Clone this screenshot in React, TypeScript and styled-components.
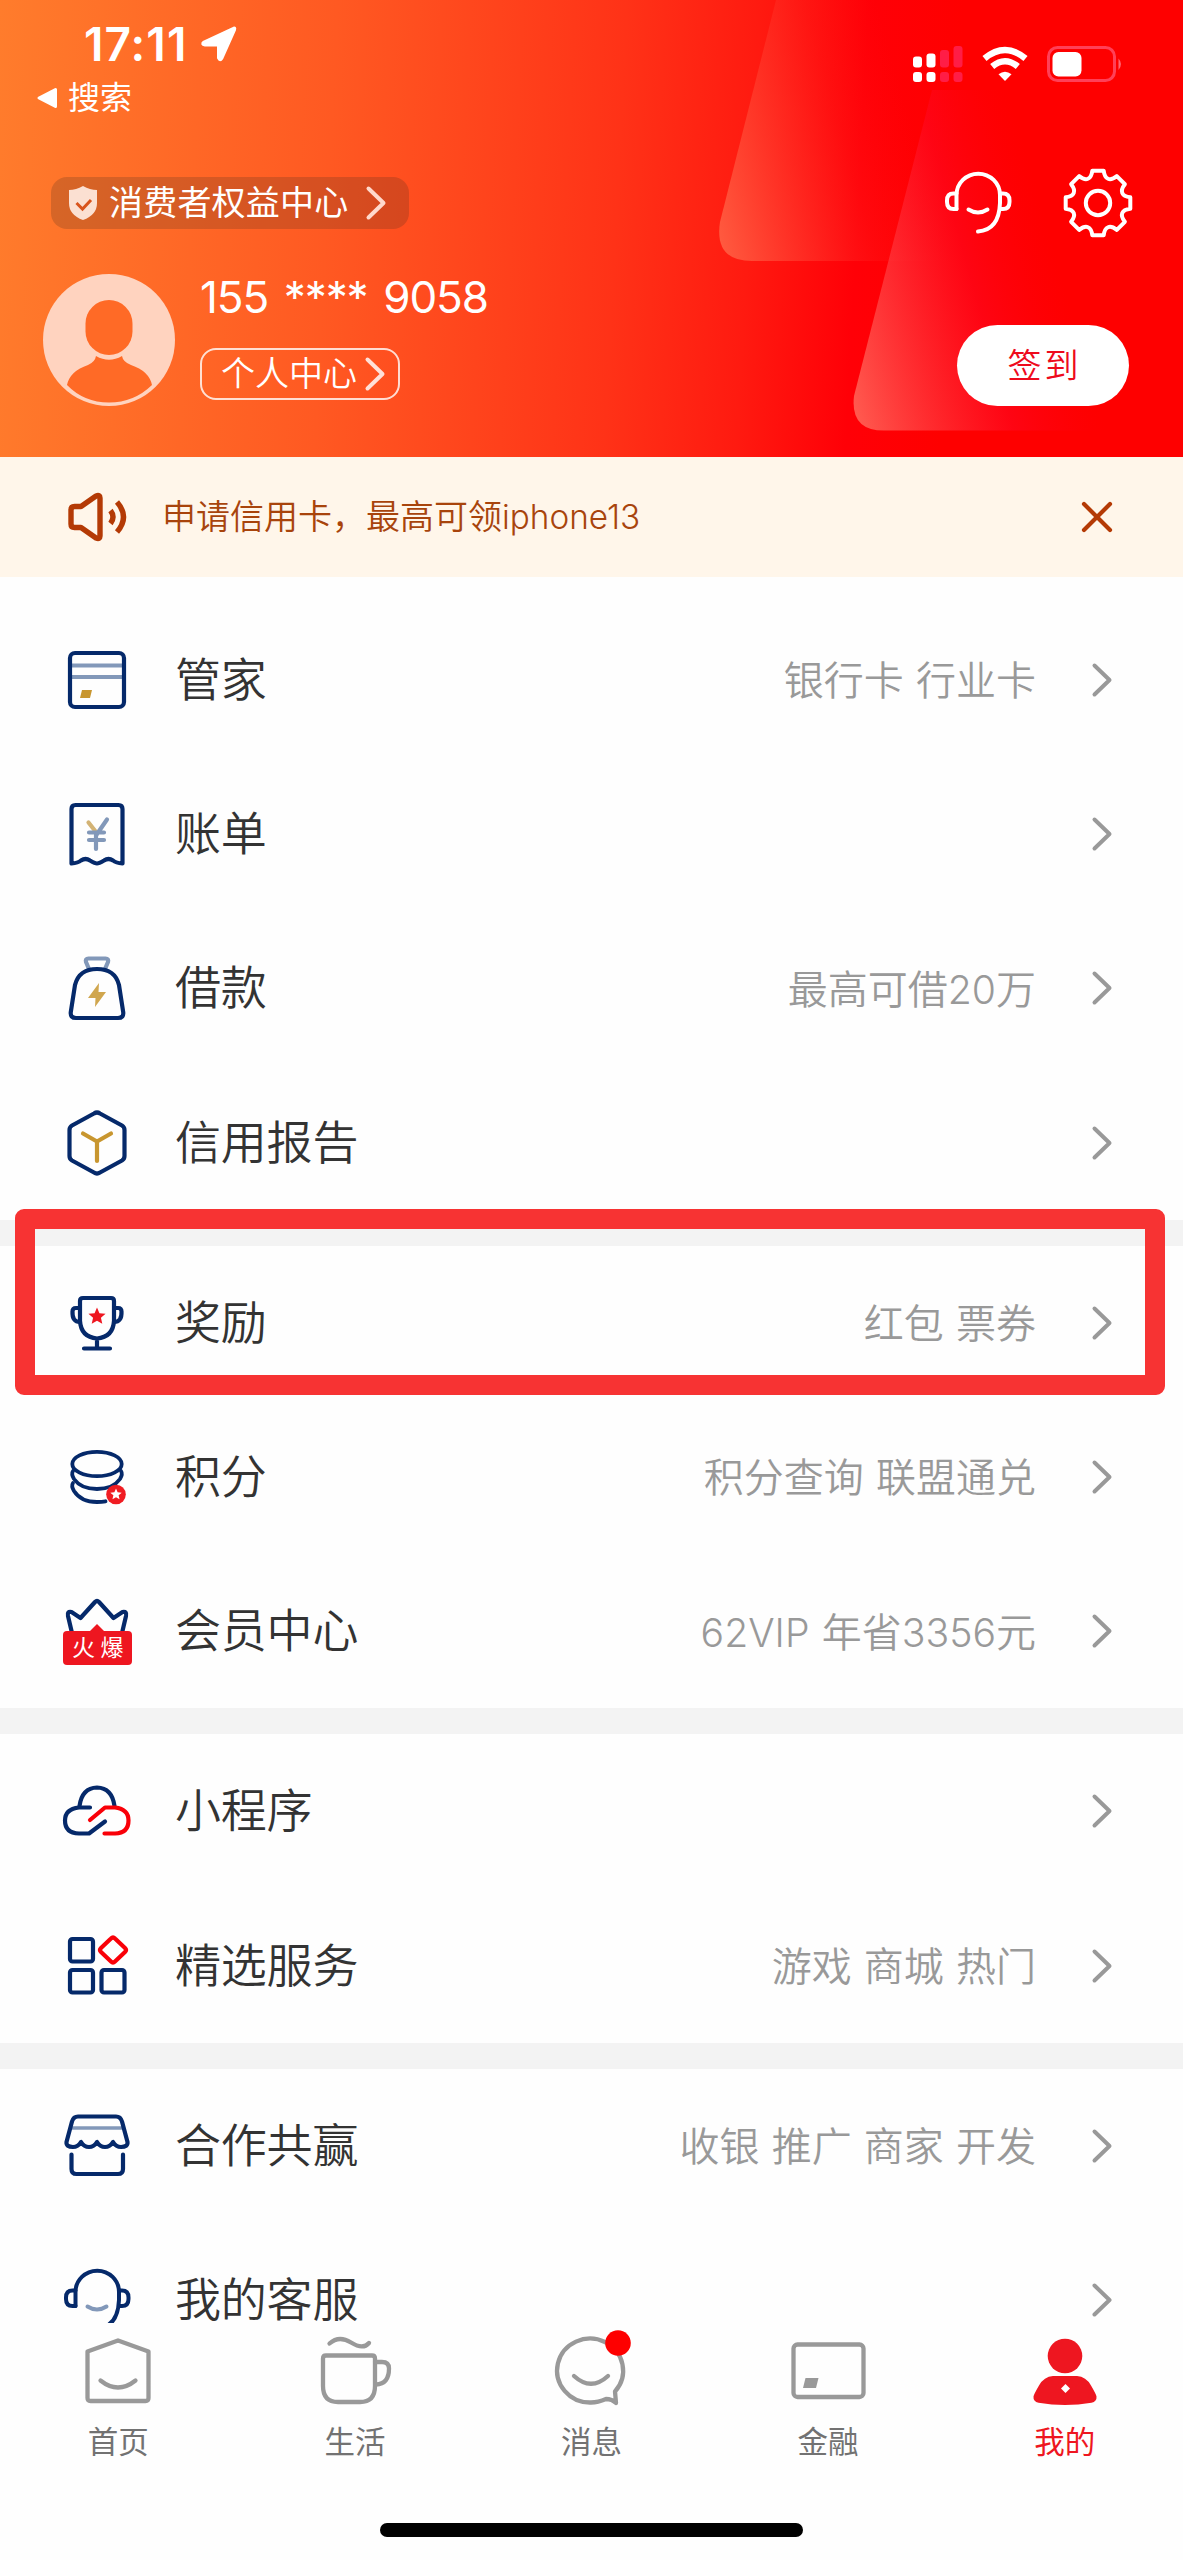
import React from "react";
import styled, { createGlobalStyle } from "styled-components";

const NAVY = "#05296a";
const STEEL = "#8298b9";
const GOLD = "#c8962f";
const RED = "#ee1620";
const FONT = `Roboto, "Noto Sans CJK SC", sans-serif`;

const GlobalStyle = createGlobalStyle`
  * { box-sizing: border-box; }
  body { margin: 0; background: #fefefe; font-family: ${FONT}; }
  svg { display: block; flex: none; overflow: visible; }
`;

const Screen = styled.div`
  width: 1183px;
  height: 2560px;
  display: flex;
  flex-direction: column;
  overflow: hidden;
  background: #fefefe;
`;

/* ---------- header ---------- */

const Header = styled.header`
  position: relative;
  flex: none;
  height: 457px;
  color: #fff;
  background: linear-gradient(93deg, #ff7c2c 0%, #ff5922 28%, #ff3217 52%, #ff1a10 63%, #ff0007 72%, #fe0000 80%);
`;

const Backdrop = styled.svg`
  position: absolute;
  left: 0;
  top: 0;
`;

const HeaderBody = styled.div`
  position: relative;
  padding-top: 20px;
`;

const StatusBar = styled.div`
  display: flex;
  justify-content: space-between;
  height: 94px;
  padding: 0 59px 0 37px;
`;

const StatusLeft = styled.div`
  display: flex;
  flex-direction: column;
  gap: 14px;
`;

const Clock = styled.div`
  display: flex;
  align-items: center;
  gap: 14px;
  height: 48px;
  padding-left: 47px;
  font: 600 46px/48px Inter, sans-serif;
  letter-spacing: 1.1px;
`;

const BackLink = styled.div`
  display: flex;
  align-items: center;
  gap: 10px;
  height: 32px;
  font-size: 32px;
  line-height: 32px;
`;

const StatusIcons = styled.div`
  display: flex;
  align-items: center;
  gap: 19px;
  height: 36px;
  margin-top: 26px;
`;

const ToolRow = styled.div`
  display: flex;
  align-items: center;
  justify-content: space-between;
  height: 52px;
  margin-top: 63px;
  padding: 0 49px 0 51px;
`;

const Tools = styled.div`
  display: flex;
  gap: 48px;
`;

const RightsPill = styled.div`
  display: flex;
  align-items: center;
  width: 358px;
  height: 52px;
  padding: 0 22px 0 17px;
  border-radius: 16px;
  background: rgba(50, 40, 30, 0.2);
  font-size: 34px;
  line-height: 52px;
  letter-spacing: 0.2px;
  white-space: nowrap;

  span { margin: 0 auto 0 11px; }
`;

const Profile = styled.div`
  display: flex;
  height: 132px;
  margin-top: 45px;
  padding: 0 54px 0 43px;
`;

const Identity = styled.div`
  display: flex;
  flex-direction: column;
  align-items: flex-start;
  margin-left: 25px;
`;

const Phone = styled.div`
  height: 48px;
  margin: -1px 0 27px 0;
  font: 400 44px/48px Inter, sans-serif;
  letter-spacing: -1.1px;
  word-spacing: 4.4px;
  white-space: pre;
`;

const CenterPill = styled.div`
  display: flex;
  align-items: center;
  justify-content: space-between;
  width: 200px;
  height: 52px;
  padding: 0 12px 0 19px;
  border: 2px solid rgba(255, 255, 255, 0.8);
  border-radius: 16px;
  font-size: 34px;
  font-weight: 350;
  line-height: 48px;
`;

const SignButton = styled.button`
  align-self: flex-end;
  width: 172px;
  height: 81px;
  margin-left: auto;
  padding: 0 0 0 3px;
  border: 0;
  border-radius: 41px;
  background: #fff;
  color: #ee0a1c;
  font: 350 34px/80px ${FONT};
  letter-spacing: 3px;
`;

/* ---------- notice ---------- */

const Notice = styled.div`
  display: flex;
  align-items: center;
  flex: none;
  height: 120px;
  padding: 0 70px 0 67px;
  background: #fff6ea;
  color: #a8440c;
`;

const NoticeText = styled.span`
  margin: 0 auto 0 34px;
  font-size: 34px;
  font-weight: 350;
  line-height: 44px;
`;

/* Latin letters and digits use a lighter face than the Chinese text beside them. */
const Latin = styled.span`
  font-family: Inter, sans-serif;
  font-size: 0.98em;
  font-weight: 300;
`;

/* ---------- list ---------- */

const List = styled.main`
  flex: 1;
  min-height: 0;
  overflow: hidden;
  padding-top: 26px;
`;

const Group = styled.section`
  & + & { border-top: 26px solid #f3f3f3; }
`;

const Row = styled.div`
  position: relative;
  display: flex;
  align-items: center;
  height: 154.2px;
  padding: 0 70px 0 57px;
`;

const Title = styled.span`
  margin: 0 auto 0 38px;
  color: #333;
  font-size: 46px;
  font-weight: 350;
  line-height: 44px;
  letter-spacing: -0.2px;
`;

const Hint = styled.span`
  margin-right: 55px;
  padding-top: 4px;
  color: #999;
  font-size: 40px;
  font-weight: 350;
  line-height: 44px;
  word-spacing: 2.4px;
`;

const HighlightFrame = styled.div`
  position: absolute;
  z-index: 1;
  top: -37px;
  left: 15px;
  width: 1150px;
  height: 186px;
  border: 20px solid #f73333;
  border-radius: 9px;
`;

const HotTag = styled.div`
  position: absolute;
  left: 63px;
  top: 77px;
  width: 69px;
  height: 34px;
  padding-left: 6px;
  border-radius: 4px;
  background: ${RED};
  color: #fff;
  font-size: 23px;
  line-height: 36px;
  letter-spacing: 5.5px;
  text-align: center;
  white-space: nowrap;
`;

/* ---------- tab bar ---------- */

const TabBar = styled.nav`
  flex: none;
  height: 237.3px;
  display: flex;
  flex-direction: column;
  align-items: center;
  justify-content: space-between;
  padding-bottom: 23px;
  background: #fefefe;
`;

const Tabs = styled.div`
  display: flex;
  width: 100%;
  padding-top: 9px;
`;

const Tab = styled.div<{ $active?: boolean }>`
  flex: 1;
  display: flex;
  flex-direction: column;
  align-items: center;
  gap: 13px;
  color: ${(p) => (p.$active ? RED : "#727272")};
  font-size: 30.5px;
  line-height: 40px;
`;

const HomeIndicator = styled.div`
  width: 423px;
  height: 14.5px;
  border-radius: 8px;
  background: #000;
`;

/* ---------- icons ---------- */

const Chevron = ({ color = "#999", width = 4 }: { color?: string; width?: number }) => (
  <svg width="22" height="36" viewBox="0 0 22 36" fill="none" stroke={color} strokeWidth={width} strokeLinecap="round" strokeLinejoin="round">
    <path d="M3.5 3.5 18.5 18 3.5 32.5" />
  </svg>
);

/* All row icons share an 80-unit box with the origin at its centre. */
const Glyph = ({ children, size = 80 }: { children: React.ReactNode; size?: number }) => (
  <svg
    width={size}
    height={size}
    viewBox={`${-size / 2} ${-size / 2} ${size} ${size}`}
    fill="none"
    stroke={NAVY}
    strokeWidth="4.2"
    strokeLinecap="round"
    strokeLinejoin="round"
  >
    {children}
  </svg>
);

const starPoints = (cx: number, cy: number, r: number, inner = 0.46) =>
  Array.from({ length: 10 }, (_, i) => {
    const a = (Math.PI / 5) * i - Math.PI / 2;
    const d = i % 2 ? r * inner : r;
    return `${(cx + d * Math.cos(a)).toFixed(2)},${(cy + d * Math.sin(a)).toFixed(2)}`;
  }).join(" ");

const CardIcon = () => (
  <Glyph>
    <path d="M-26-14.5H26M-26-3H26" stroke={STEEL} strokeWidth="3.8" strokeLinecap="butt" />
    <rect x="-27" y="-27" width="54" height="54" rx="5" />
    <path d="M-15 10h10l-2 8h-10z" fill={GOLD} stroke="none" />
  </Glyph>
);

const BillIcon = () => (
  <Glyph>
    <path d="M-25.500 29.500V-25q0-4 4-4h43q4 0 4 4V29.500Q19 29 16 26.500q-4.500-3-9 0Q2 29.500 0 29.500T-7 26.500q-4.500-3-9 0-3 2.500-9.500 3z" />
    <path d="M-8.500-11.500-1-2" stroke="#d3b375" />
    <path d="M10-14.500-1 1.500V15M-8-1.500H7M-8 6H7" stroke={STEEL} />
  </Glyph>
);

const BagIcon = () => (
  <Glyph>
    <path d="M-8-19-11-26q-1-3.500 2.500-3.500h17q3.500 0 2.500 3.500L8-19" stroke={STEEL} />
    <path d="M-21 30q-6 0-5.200-6L-22-3Q-18-19 0-19T22-3L26.200 24q.8 6-5.200 6z" />
    <path d="M2-5-9 10h7.500L-2 19 9 4H1.500z" fill={GOLD} fillOpacity=".85" stroke="none" />
  </Glyph>
);

const CubeIcon = () => (
  <Glyph>
    <path d="M-3-29.500q3-2 6 0L25-17.500q2.500 1.500 2.500 4.500v26q0 3-2.500 4.500L3 29.500q-3 2-6 0L-25 17.500q-2.500-1.500-2.500-4.500v-26q0-3 2.500-4.500z" />
    <path d="M-14-9.500 0-1.500 14-9.500M0-1.500V18" stroke={GOLD} />
  </Glyph>
);

const TrophyIcon = () => (
  <Glyph>
    <path d="M-17-22q0-3 3-3h28q3 0 3 3V-2Q16 14 0 15.500-16 14-17-2zM0 16v9M-13 25.500h26" />
    <path d="M-18-15h-3q-3.500 0-3.500 3.500Q-25-1-17-1M18-15h3q3.500 0 3.500 3.500Q25-1 17-1" />
    <polygon points={starPoints(0, -6.500, 9)} fill={RED} stroke="none" />
  </Glyph>
);

const CoinsIcon = () => (
  <Glyph>
    <g strokeWidth="3.800">
      <ellipse cy="-13" rx="24.700" ry="12.200" />
      <path d="M-24-6Q-26-3-23 2-16 12 0 12 16 12 23 2 26-3 24-6" />
      <path d="M-24 6Q-26 9-23 14-16 25 0 25q5 0 8.500-.7" />
    </g>
    <circle cx="19" cy="17.500" r="9.800" fill="#f01c22" stroke="none" />
    <polygon points={starPoints(19, 17.500, 6)} fill="#fff" stroke="none" />
  </Glyph>
);

const CrownIcon = () => (
  <Glyph>
    <path d="M-25 2-29-15q-1-5 3.500-4l9 6L-2-29q2-2 4 0L16.500-13l9-6q4.500-1 3.500 4L25 2" />
    <path d="M-8 1 0-7 8 1z" fill={RED} stroke="none" />
  </Glyph>
);

const CloudIcon = () => (
  <Glyph>
    <path d="M-17.500-5Q-15-23 0-23.500 15-23 17.500-5" />
    <path d="M-7-3.500H-18Q-32-2-32 9.500-32 22-18 22.500H-8L8 10.500" />
    <path d="M-7 9 8-3.500H18Q31.500-2 31.500 9.500 31.500 22 18 22.500H7.500" stroke="#f90008" />
  </Glyph>
);

const GridIcon = () => (
  <Glyph>
    <rect x="-27" y="-27" width="23" height="22.500" rx="2.500" />
    <rect x="-27" y="4" width="23" height="22.500" rx="2.500" />
    <rect x="4.500" y="4" width="23" height="22.500" rx="2.500" />
    <path d="M14-27.500q2-2 4 0L28-18q2 2 0 4L18-4.500q-2 2-4 0L4-14q-2-2 0-4z" stroke="#f90008" />
  </Glyph>
);

const ShopIcon = () => (
  <Glyph>
    <path d="M-25-18H26" stroke={STEEL} strokeWidth="3.600" strokeLinecap="butt" />
    <path d="M-19-29.500h38q4.500 0 6 5L30.500-4Q31 1 24 1 19 1 16-4 13 1 8 1T0-4Q-3 1-8 1T-16-4Q-19 1-24 1-31 1-30.500-4L-25-24.500q1.500-5 6-5z" />
    <path d="M-25.500 8.500V23q0 5 5 5h41.500q5 0 5-5V8.500" />
  </Glyph>
);

const Headset = ({ color, smile, size = 80 }: { color: string; smile: string; size?: number }) => (
  <Glyph size={size}>
    <g stroke={color} strokeWidth="4">
      <path d="M-21.500 6V-8A21.700 21.300 0 0 1 22-8V0Q21 27 0 28.500" />
      <path d="M-21.500-9.500h-3q-6.500 0-6.500 7v1.500q0 7 6.500 7h3M22-9.500h3q6.500 0 6.500 7v1.500q0 7-6.500 7h-3" />
      <path d="M-9.500 6.500Q0 12.500 9.500 6.500" stroke={smile} />
    </g>
  </Glyph>
);

const gearPath = (() => {
  const at = (deg: number, r: number) => {
    const a = (deg * Math.PI) / 180;
    return `${(r * Math.sin(a)).toFixed(2)} ${(-r * Math.cos(a)).toFixed(2)}`;
  };
  let d = "";
  for (let k = 0; k < 8; k++) {
    const t = k * 45;
    d += `${k ? "L" : "M"}${at(t - 10, 32.8)}L${at(t + 10, 32.8)}C${at(t + 16, 24.5)} ${at(t + 29, 24.5)} ${at(t + 35, 32.8)}`;
  }
  return d + "Z";
})();

const GearIcon = () => (
  <Glyph size={72}>
    <g stroke="#fff" strokeWidth="4">
      <path d={gearPath} />
      <circle r="12.200" />
    </g>
  </Glyph>
);

const HeaderBackdrop = () => (
  <Backdrop width="1183" height="457" viewBox="0 0 1183 457">
    <defs>
      <linearGradient id="panelA" gradientUnits="userSpaceOnUse" x1="720" y1="238" x2="927" y2="180">
        <stop offset="0" stopColor="#ff7a58" stopOpacity=".64" />
        <stop offset=".68" stopColor="#ff4038" stopOpacity=".13" />
        <stop offset="1" stopColor="#ff2020" stopOpacity="0" />
      </linearGradient>
      <linearGradient id="panelB" gradientUnits="userSpaceOnUse" x1="855" y1="408" x2="1082" y2="344">
        <stop offset="0" stopColor="#ff7868" stopOpacity=".74" />
        <stop offset=".62" stopColor="#ff0a26" stopOpacity=".5" />
        <stop offset="1" stopColor="#ff0010" stopOpacity="0" />
      </linearGradient>
    </defs>
    <path d="M776 0 720 222Q714 261 752 261H1000V0z" fill="url(#panelA)" />
    <path d="M932 90 854 396Q850 430.500 884 430.500H1150V90z" fill="url(#panelB)" />
  </Backdrop>
);

const tabStroke = { fill: "none", stroke: "#999", strokeWidth: 4.3, strokeLinecap: "round", strokeLinejoin: "round" } as const;

const TabIcon = ({ children }: { children: React.ReactNode }) => (
  <svg width="80" height="78" viewBox="-40 -40 80 78" {...tabStroke}>
    {children}
  </svg>
);

const mixed = (text: string) =>
  text.split(/([A-Za-z0-9]+)/).map((part, i) => (i % 2 ? <Latin key={i}>{part}</Latin> : part));

/* ---------- content ---------- */

type Item = { title: string; hint?: string; icon: React.ReactNode; framed?: boolean; tag?: string };

const groups: Item[][] = [
  [
    { title: "管家", hint: "银行卡 行业卡", icon: <CardIcon /> },
    { title: "账单", icon: <BillIcon /> },
    { title: "借款", hint: "最高可借20万", icon: <BagIcon /> },
    { title: "信用报告", icon: <CubeIcon /> },
  ],
  [
    { title: "奖励", hint: "红包 票券", icon: <TrophyIcon />, framed: true },
    { title: "积分", hint: "积分查询 联盟通兑", icon: <CoinsIcon /> },
    { title: "会员中心", hint: "62VIP 年省3356元", icon: <CrownIcon />, tag: "火爆" },
  ],
  [
    { title: "小程序", icon: <CloudIcon /> },
    { title: "精选服务", hint: "游戏 商城 热门", icon: <GridIcon /> },
  ],
  [
    { title: "合作共赢", hint: "收银 推广 商家 开发", icon: <ShopIcon /> },
    { title: "我的客服", icon: <Headset color={NAVY} smile={STEEL} /> },
  ],
];

const tabs = [
  {
    label: "首页",
    icon: (
      <path d="M-30.500-20.500 0-31.500 30.500-20.500V26q0 3-3 3h-55q-3 0-3-3zM-17.500 8.500Q0 22.500 17.500 8.500" />
    ),
  },
  {
    label: "生活",
    icon: (
      <>
        <path d="M-32-13.500q0-3 3-3h46q3 0 3 3V14q0 16-15 16h-22q-15 0-15-16z" />
        <path d="M20-10h7q7 0 7 6.500Q34 12 21 12.500M-25.500-28.500Q-16-37-4-29.500T14-29" />
      </>
    ),
  },
  {
    label: "消息",
    icon: (
      <>
        <path d="M15 27Q7 30.500 0 30.500A33 32 0 1 1 24 19.500L25 31q-4-4-10-4z" />
        <path d="M-17 4Q0 19.500 17 4" />
        <circle cx="27" cy="-29" r="12.800" fill="#fe0000" stroke="none" />
      </>
    ),
  },
  {
    label: "金融",
    icon: (
      <>
        <rect x="-34.500" y="-27.500" width="70" height="52.500" rx="4" />
        <path d="M-22.500 6h13l-2.500 10h-13z" fill="#999" stroke="none" />
      </>
    ),
  },
  {
    label: "我的",
    active: true,
    icon: (
      <g fill={RED} stroke="none">
        <circle cx="0" cy="-16" r="17.300" />
        <path d="M-12 4H12Q21 4.500 26 13.500q5 8.500 5.500 11 .5 5-5 6.300-26.500 4.500-53 0-5.500-1.300-5-6.300.5-2.500 5.500-11 5-9 14-9.500z" />
        <path d="M.5 12 5 16.500 .5 21-4 16.500z" fill="#fff" />
      </g>
    ),
  },
];

export default function App() {
  return (
    <Screen>
      <GlobalStyle />
      <Header>
        <HeaderBackdrop />
        <HeaderBody>
          <StatusBar>
            <StatusLeft>
              <Clock>
                17:11
                <svg width="36" height="36" viewBox="0 0 36 36" fill="#fff" stroke="#fff" strokeWidth="3" strokeLinejoin="round">
                  <path d="M32 2.500Q34.500 1 33.500 4L21 32q-2 3.500-3.500 0V19H4q-4-.5-1-3z" />
                </svg>
              </Clock>
              <BackLink>
                <svg width="21" height="22" viewBox="0 0 21 22" fill="#fff" stroke="#fff" strokeWidth="3" strokeLinejoin="round">
                  <path d="M2 11 18.500 2.500v17z" />
                </svg>
                搜索
              </BackLink>
            </StatusLeft>
            <StatusIcons>
              <svg width="50" height="36" viewBox="0 0 50 36" fill="#fff">
                <rect x="0" y="10.500" width="9" height="11" rx="3" />
                <rect x="13.500" y="7.500" width="9" height="14" rx="3" />
                <rect x="0" y="26" width="9" height="10" rx="3" />
                <rect x="13.500" y="26" width="9" height="10" rx="3" />
                <g fill="#ff1d46">
                  <rect x="27" y="4" width="9" height="17.500" rx="3" />
                  <rect x="40.500" y="0" width="9" height="21.500" rx="3" />
                  <rect x="27" y="26" width="9" height="10" rx="3" />
                  <rect x="40.500" y="26" width="9" height="10" rx="3" />
                </g>
              </svg>
              <svg width="46" height="36" viewBox="0 0 46 36" fill="none" stroke="#fff" strokeWidth="6.400">
                <path d="M2.500 12.500Q23-4.500 43.500 12.500M10.200 20.500Q23 10 35.800 20.500" />
                <path d="M23 35 16.500 28.300Q23 23 29.500 28.300z" fill="#fff" stroke="none" />
              </svg>
              <svg width="77" height="36" viewBox="0 0 77 36">
                <rect x="1.500" y="1.500" width="66" height="33" rx="9" fill="none" stroke="#ff4058" strokeWidth="3" />
                <rect x="5.500" y="6" width="29" height="24.500" rx="6" fill="#fff" />
                <path d="M71.500 12.500q5 5.500 0 11.500z" fill="#ff6673" />
              </svg>
            </StatusIcons>
          </StatusBar>

          <ToolRow>
            <RightsPill>
              <svg width="30" height="36" viewBox="0 0 30 36">
                <path d="M15 1q7 4 14 4v13q0 12-14 17Q1 30 1 18V5q7 0 14-4z" fill="#fbe0d2" />
                <path d="m8.500 18 6 6 8.500-9" fill="none" stroke="#d9541c" strokeWidth="3" />
              </svg>
              <span>消费者权益中心</span>
              <Chevron color="#ffd9cc" />
            </RightsPill>
            <Tools>
              <Headset color="#fff" smile="#fff" size={72} />
              <GearIcon />
            </Tools>
          </ToolRow>

          <Profile>
            <svg width="132" height="132" viewBox="0 0 132 132">
              <circle cx="66" cy="66" r="66" fill="#ffd3bf" />
              <rect x="42.500" y="26" width="47" height="55" rx="23.500" fill="#ff6a26" />
              <path d="M53 82q13 7.500 26 0 1 6 9 9 18 6 21 20-18 17.500-43 17.500T24 111q3-14 21-20 7-3 8-9z" fill="#ff6a26" />
            </svg>
            <Identity>
              <Phone>155 **** 9058</Phone>
              <CenterPill>
                个人中心
                <Chevron color="#ffe0d8" />
              </CenterPill>
            </Identity>
            <SignButton>签到</SignButton>
          </Profile>
        </HeaderBody>
      </Header>

      <Notice>
        <svg width="61" height="50" viewBox="0 0 61 50" fill="none" stroke="#b43a05" strokeWidth="5.400" strokeLinecap="round" strokeLinejoin="round">
          <path d="M7.500 14.500H14L29 4q4-1.500 4 2V44q0 3.500-4 2L14 35.500H7.500Q4 35.500 4 32V18q0-3.500 3.500-3.500z" />
          <path d="M43.500 18.500Q48.500 25 43.500 31.500M50 10Q63 25 50 40" strokeLinecap="butt" />
        </svg>
        <NoticeText>{mixed("申请信用卡，最高可领iphone13")}</NoticeText>
        <svg width="32" height="32" viewBox="0 0 32 32" stroke="#b43a05" strokeWidth="4.200" strokeLinecap="round">
          <path d="M3 3 29 29M29 3 3 29" />
        </svg>
      </Notice>

      <List>
        {groups.map((items, g) => (
          <Group key={g}>
            {items.map((item) => (
              <Row key={item.title}>
                {item.icon}
                {item.tag && <HotTag>{item.tag}</HotTag>}
                <Title>{item.title}</Title>
                {item.hint && <Hint>{mixed(item.hint)}</Hint>}
                <Chevron />
                {item.framed && <HighlightFrame />}
              </Row>
            ))}
          </Group>
        ))}
      </List>

      <TabBar>
        <Tabs>
          {tabs.map((tab) => (
            <Tab key={tab.label} $active={tab.active}>
              <TabIcon>{tab.icon}</TabIcon>
              {tab.label}
            </Tab>
          ))}
        </Tabs>
        <HomeIndicator />
      </TabBar>
    </Screen>
  );
}
